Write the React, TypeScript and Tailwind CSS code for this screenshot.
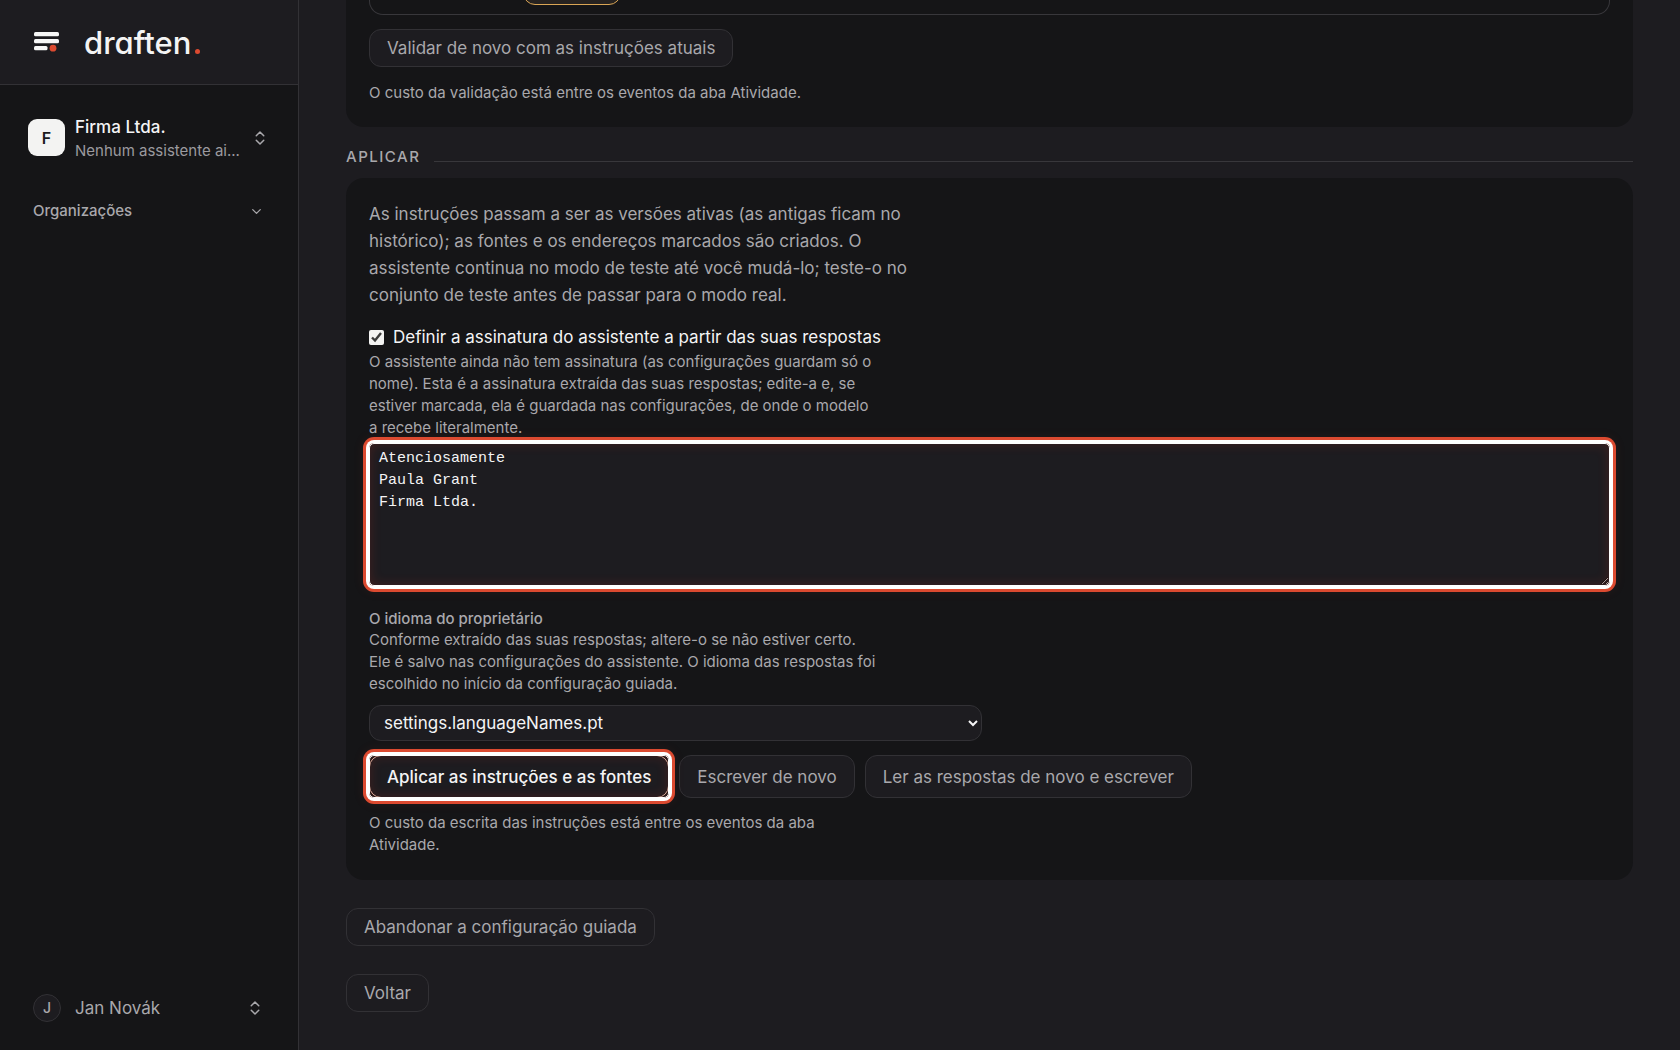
import { useState } from 'react';
import type { ReactNode } from 'react';
import { ChevronDown, ChevronsUpDown } from 'lucide-react';

const languages = ['settings.languageNames.pt', 'settings.languageNames.en', 'settings.languageNames.cs'];

function Logo() {
  return (
    <a href="#" className="flex items-center gap-[25px]" aria-label="draften">
      <svg width="25" height="20" viewBox="0 0 25 20" fill="none">
        <rect x="0" y="0" width="25" height="4.2" rx="1.5" fill="#f7f7f7" />
        <rect x="0" y="7" width="25" height="4.2" rx="1.5" fill="#f7f7f7" />
        <rect x="0" y="14" width="13.5" height="4.2" rx="1.5" fill="#f7f7f7" />
        <circle cx="19" cy="16.2" r="3.4" fill="#dc4a30" />
      </svg>
      <span className="flex items-baseline gap-1 pt-[2px]">
        <span className="text-[31px] leading-10 font-medium text-[#f4f4f4] [font-feature-settings:'cv11']">
          draften
        </span>
        <span className="h-[5px] w-[5px] rounded-full bg-[#dc4a30]" />
      </span>
    </a>
  );
}

function Sidebar() {
  return (
    <aside className="flex w-[299px] shrink-0 flex-col border-r border-[#323135] bg-[#151517]">
      <div className="flex h-[85px] items-center border-b border-[#323135] bg-[#1d1c20] pl-[34px]">
        <Logo />
      </div>
      <button className="mt-[27px] flex items-center gap-[10px] pr-[29px] pl-[28px] text-left">
        <span className="flex h-[37px] w-[37px] shrink-0 items-center justify-center rounded-[9px] bg-[#f3f3f2] text-base font-semibold text-[#1b1b1d]">
          F
        </span>
        <span className="min-w-0 flex-1 pt-[3px]">
          <span className="block text-[17px] leading-6 font-medium text-[#f4f4f5]">Firma Ltda.</span>
          <span className="block text-[15px] leading-6 text-[#9b9a9f]">Nenhum assistente ai...</span>
        </span>
        <ChevronsUpDown size={18} strokeWidth={2} className="text-[#a9a8ac]" />
      </button>
      <button className="mt-9 flex items-center justify-between pr-[34px] pl-[33px] text-[#a9a8ac]">
        <span className="text-[15px] leading-6 font-medium">Organizações</span>
        <ChevronDown size={15} strokeWidth={2} />
      </button>
      <button className="mt-auto mb-[28px] flex items-center pr-[34px] pl-[33px] text-[#a9a8ac]">
        <span className="flex h-7 w-7 items-center justify-center rounded-full border border-[#323135] bg-[#1d1c20] text-sm font-medium">
          J
        </span>
        <span className="ml-[14px] flex-1 text-left text-[17px] leading-7">Jan Novák</span>
        <ChevronsUpDown size={18} strokeWidth={2} />
      </button>
    </aside>
  );
}

function OutlineButton({ children, tall = false }: { children: ReactNode; tall?: boolean }) {
  return (
    <button
      className={`rounded-xl border border-[#323135] bg-[#1d1c20] px-[17px] text-[17px] leading-6 text-[#a9a8ac] ${
        tall ? 'h-[43px]' : 'h-[38px]'
      }`}
    >
      {children}
    </button>
  );
}

// White and red frame around the controls the user should look at
function Spotlight({ children }: { children: ReactNode }) {
  return (
    <div className="relative flex">
      {children}
      <span className="pointer-events-none absolute inset-0 rounded-[5px] border border-white shadow-[0_0_0_3px_#fff,0_0_0_6px_#dc4a30,0_0_12px_6px_rgba(220,74,48,0.08),inset_0_0_12px_rgba(220,50,30,0.2)]" />
    </div>
  );
}

function Hint({ children, className = '' }: { children: ReactNode; className?: string }) {
  return <p className={`text-[15px] leading-[22px] text-[#a9a8ac] ${className}`}>{children}</p>;
}

function ApplyCard() {
  const [useSignature, setUseSignature] = useState(true);
  const [signature, setSignature] = useState('Atenciosamente\nPaula Grant\nFirma Ltda.');
  const [language, setLanguage] = useState(languages[0]);

  return (
    <div className="rounded-[18px] bg-[#151517] px-[23px] pt-[23px] pb-6">
      <p className="max-w-[544px] text-[17px] leading-[27px] text-[#a9a8ac]">
        As instruções passam a ser as versões ativas (as antigas ficam no histórico); as fontes e os
        endereços marcados são criados. O assistente continua no modo de teste até você mudá-lo;
        teste-o no conjunto de teste antes de passar para o modo real.
      </p>
      <label className="mt-[14px] flex items-center gap-[9px] text-[17px] leading-7 text-[#f4f4f5]">
        <input
          type="checkbox"
          checked={useSignature}
          onChange={(e) => setUseSignature(e.target.checked)}
          className="h-[15px] w-[15px] accent-[#f3f3f2]"
        />
        Definir a assinatura do assistente a partir das suas respostas
      </label>
      <Hint className="max-w-[510px]">
        O assistente ainda não tem assinatura (as configurações guardam só o nome). Esta é a
        assinatura extraída das suas respostas; edite-a e, se estiver marcada, ela é guardada nas
        configurações, de onde o modelo a recebe literalmente.
      </Hint>
      <div className="mt-1">
        <Spotlight>
          <textarea
            aria-label="Assinatura"
            value={signature}
            onChange={(e) => setSignature(e.target.value)}
            className="h-[143px] w-full resize-y border border-[#323135] bg-[#1d1c20] px-[9px] py-1 font-['Liberation_Mono',monospace] text-[15px] leading-[22px] text-[#f4f4f5] outline-none"
          />
        </Spotlight>
      </div>
      <label
        htmlFor="owner-language"
        className="mt-[22px] block text-[15px] leading-[21px] font-medium text-[#a9a8ac]"
      >
        O idioma do proprietário
      </label>
      <Hint className="max-w-[510px]">
        Conforme extraído das suas respostas; altere-o se não estiver certo. Ele é salvo nas
        configurações do assistente. O idioma das respostas foi escolhido no início da configuração
        guiada.
      </Hint>
      <select
        id="owner-language"
        value={language}
        onChange={(e) => setLanguage(e.target.value)}
        className="mt-[10px] block h-9 w-full max-w-[613px] rounded-xl border border-[#323135] bg-[#1d1c20] px-[10px] text-[17px] text-[#f4f4f5]"
      >
        {languages.map((l) => (
          <option key={l}>{l}</option>
        ))}
      </select>
      <div className="mt-[14px] flex gap-[10px]">
        <Spotlight>
          <button className="h-[43px] rounded-xl border border-[#d9b9a8] bg-[#1d1c20] px-[17px] text-[17px] leading-6 font-medium text-[#f4f4f5]">
            Aplicar as instruções e as fontes
          </button>
        </Spotlight>
        <OutlineButton tall>Escrever de novo</OutlineButton>
        <OutlineButton tall>Ler as respostas de novo e escrever</OutlineButton>
      </div>
      <Hint className="mt-[14px] max-w-[480px]">
        O custo da escrita das instruções está entre os eventos da aba Atividade.
      </Hint>
    </div>
  );
}

export default function App() {
  return (
    <div className="flex h-screen overflow-hidden bg-[#1d1c20] font-['Inter',sans-serif] scheme-dark">
      <Sidebar />
      <main className="min-w-0 flex-1 px-[47px]">
        <section className="rounded-b-[18px] bg-[#151517] px-[23px] pb-[23px]">
          <div className="flex h-[15px] items-end rounded-b-[14px] border border-t-0 border-[#38373b] pb-[9px] pl-[153px]">
            <div className="h-6 w-[98px] shrink-0 rounded-xl border border-[#d9a555] bg-[#262220]" />
          </div>
          <div className="mt-[14px] flex">
            <OutlineButton>Validar de novo com as instruções atuais</OutlineButton>
          </div>
          <Hint className="mt-[15px]">O custo da validação está entre os eventos da aba Atividade.</Hint>
        </section>
        <section className="mt-5">
          <div className="mb-[11px] flex items-center gap-[14px]">
            <h2 className="text-[15px] leading-5 font-medium tracking-widest text-[#a9a8ac]">APLICAR</h2>
            <div className="mt-2 h-px flex-1 bg-[#38373b]" />
          </div>
          <ApplyCard />
        </section>
        <div className="mt-7 flex flex-col items-start gap-7">
          <OutlineButton>Abandonar a configuração guiada</OutlineButton>
          <OutlineButton>Voltar</OutlineButton>
        </div>
      </main>
    </div>
  );
}
